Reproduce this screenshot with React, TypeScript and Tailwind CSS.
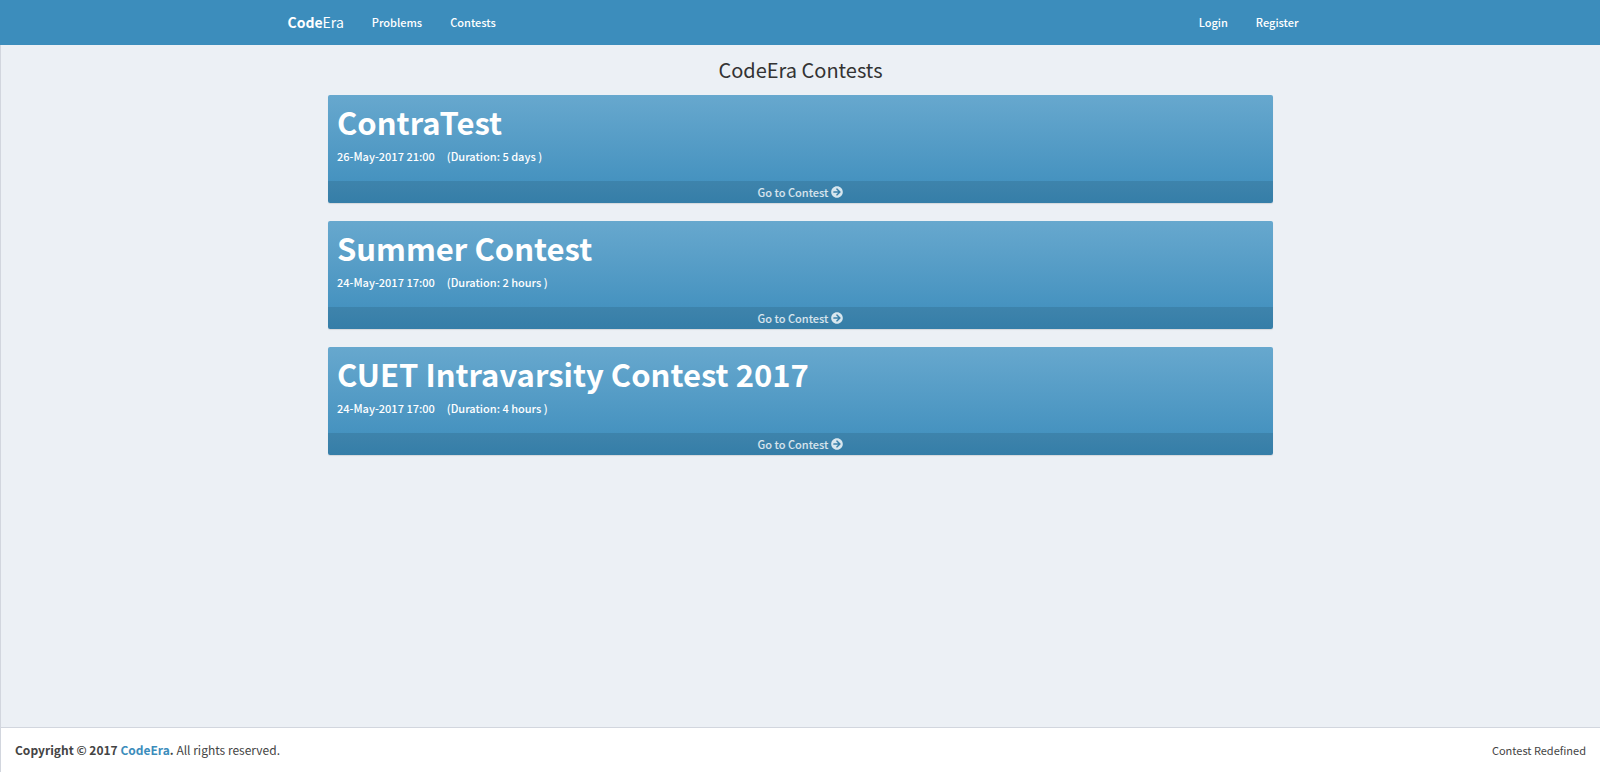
import { FaArrowCircleRight } from "react-icons/fa";

type Contest = { name: string; start: string; duration: string };

const contests: Contest[] = [
  { name: "ContraTest", start: "26-May-2017 21:00", duration: "5 days" },
  { name: "Summer Contest", start: "24-May-2017 17:00", duration: "2 hours" },
  { name: "CUET Intravarsity Contest 2017", start: "24-May-2017 17:00", duration: "4 hours" },
];

function NavLink({ children }: { children: string }) {
  return (
    <a href="#" className="px-3.5 text-[11px] leading-[45px] font-medium text-white">
      {children}
    </a>
  );
}

function ContestCard({ contest }: { contest: Contest }) {
  return (
    <section className="rounded-xs bg-linear-to-b from-[#67a8ce] to-[#3c8dbc] text-white shadow-[0_1px_1px_rgba(0,0,0,0.1)]">
      <div className="px-[9px] pt-2 pb-[18px]">
        <h2 className="mb-2 text-[31px] leading-[38px] font-bold">{contest.name}</h2>
        <p className="flex gap-3 text-[11px] leading-[14px] font-medium">
          <span>{contest.start}</span>
          <span>(Duration: {contest.duration} )</span>
        </p>
      </div>
      <a
        href="#"
        className="flex items-center justify-center gap-[3px] rounded-b-xs bg-black/10 text-[11px] leading-[22px] font-medium text-white/80"
      >
        Go to Contest
        <FaArrowCircleRight className="size-3" aria-hidden="true" />
      </a>
    </section>
  );
}

export default function App() {
  return (
    <div className="flex min-h-screen flex-col bg-[#ecf0f5] font-['Noto_Sans_CJK_SC',sans-serif] text-[#333]">
      <header className="bg-[#3c8dbc]">
        <nav className="mx-auto flex max-w-[1053px] items-center justify-between">
          <div className="flex items-center">
            <a href="#" className="px-3.5 text-sm leading-[45px] text-white">
              <b>Code</b>Era
            </a>
            <NavLink>Problems</NavLink>
            <NavLink>Contests</NavLink>
          </div>
          <div className="flex items-center pr-3.5">
            <NavLink>Login</NavLink>
            <NavLink>Register</NavLink>
          </div>
        </nav>
      </header>
      <div className="flex grow flex-col border-l border-[#d2d6de]">
        <main className="mx-auto w-full max-w-[945px] grow">
          <h1 className="pt-[13px] pb-[13px] text-center text-xl leading-6">CodeEra Contests</h1>
          <div className="flex flex-col gap-[18px]">
            {contests.map((contest) => (
              <ContestCard key={contest.name} contest={contest} />
            ))}
          </div>
        </main>
        <footer className="flex items-center justify-between border-t border-[#d2d6de] bg-white px-3.5 py-[13px] text-xs leading-[18px] text-[#444]">
          <p>
            <b>
              Copyright © 2017{" "}
              <a href="#" className="text-[#3c8dbc]">
                CodeEra
              </a>
              .
            </b>{" "}
            All rights reserved.
          </p>
          <p className="text-[11px]">Contest Redefined</p>
        </footer>
      </div>
    </div>
  );
}
